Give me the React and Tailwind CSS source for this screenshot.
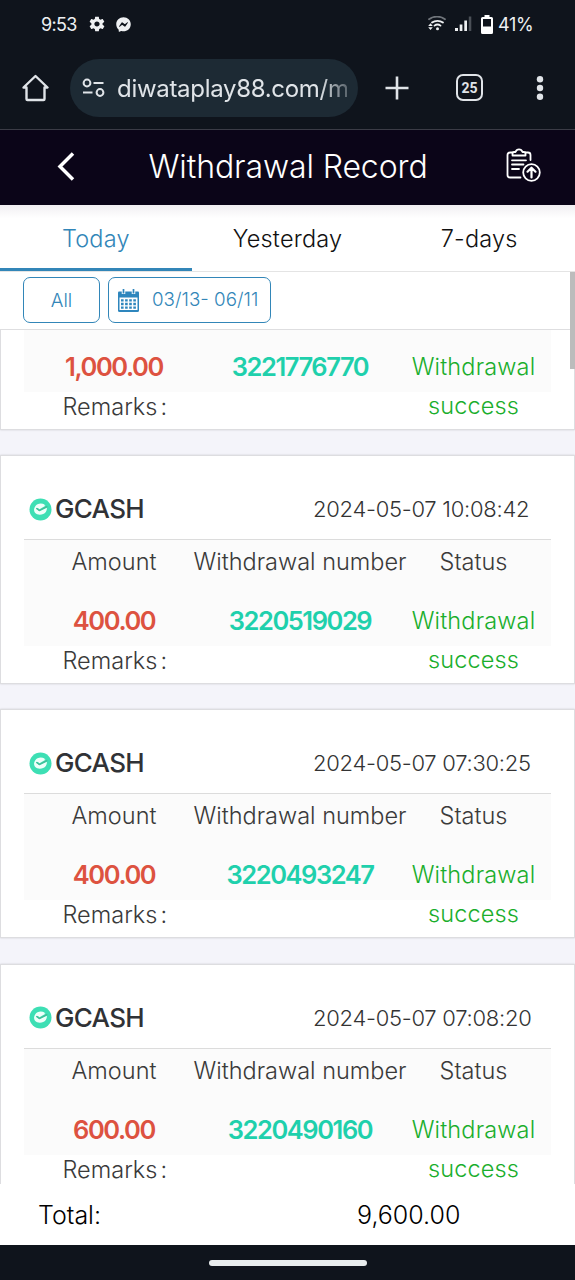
import { useState } from "react";
import clsx from "clsx";
import { IoMdSettings } from "react-icons/io";
import { FaFacebookMessenger } from "react-icons/fa";

const records = [
  { id: "3221776770", amount: "1,000.00" },
  { id: "3220519029", amount: "400.00", time: "2024-05-07 10:08:42" },
  { id: "3220493247", amount: "400.00", time: "2024-05-07 07:30:25" },
  { id: "3220490160", amount: "600.00", time: "2024-05-07 07:08:20" },
];

const tabs = ["Today", "Yesterday", "7-days"];

function StatusBar() {
  return (
    <div className="flex h-12 items-center justify-between pl-[41px] pr-[42px] text-[18px] text-[#eef0f2]">
      <div className="flex items-center">
        <span className="w-[36px] whitespace-nowrap tracking-[-0.7px]">9:53</span>
        <IoMdSettings className="ml-[11px] h-[18px] w-[18px]" />
        <FaFacebookMessenger className="ml-[10px] h-[15px] w-[15px]" />
      </div>
      <div className="flex items-center">
        <svg className="h-[16px] w-[18px]" viewBox="0 0 18 16" fill="none" strokeLinecap="round">
          <path d="M1 3.2C5.500 -.2 12.500 -.2 17 3.200" stroke="#70757b" strokeWidth="1.800" />
          <path d="M4 6.500C7 4.200 12 4.200 15 6.500M6.500 9.600C8.200 8.300 10.800 8.300 12.500 9.600" stroke="#eef0f2" strokeWidth="1.800" />
          <circle cx="9.500" cy="12.700" r="1.500" fill="#eef0f2" />
          <path d="M.2 10L2.500 7.300L4.800 10ZM.2 11.300L2.500 14L4.800 11.300Z" fill="#eef0f2" />
        </svg>
        <svg className="ml-[9px] h-[16px] w-[17px]" viewBox="0 0 17 16">
          <rect x="0" y="12" width="3" height="3" fill="#eef0f2" />
          <rect x="4.700" y="8.500" width="2.700" height="6.500" fill="#eef0f2" />
          <rect x="9.300" y="4.500" width="2.700" height="10.500" fill="#eef0f2" />
          <rect x="13.800" y="0.500" width="2.500" height="14.500" fill="#4b5057" />
        </svg>
        <svg className="ml-[9px] h-[19px] w-[12px]" viewBox="0 0 12 19">
          <path d="M3.500 0H8.500V2H10.500Q12 2 12 3.500V17.500Q12 19 10.500 19H1.500Q0 19 0 17.500V3.500Q0 2 1.500 2H3.500Z" fill="#fff" />
          <rect x="2" y="4" width="8" height="7.500" fill="#0f141c" />
        </svg>
        <span className="ml-[5px] w-[35px] whitespace-nowrap tracking-[-0.3px]">41%</span>
      </div>
    </div>
  );
}

function BrowserBar() {
  return (
    <div className="flex h-[82px] items-center border-b border-[#3b3c46] pb-[2px] pl-[22px] text-[#e0e4e8]">
      <svg className="h-[28px] w-[27px]" viewBox="0 0 27 28" fill="none" stroke="currentColor" strokeWidth="2.400" strokeLinejoin="round">
        <path d="M1.500 13.500L13.500 2L25.500 13.500H22.500V25Q22.500 26 21.500 26H5.500Q4.500 26 4.500 25V13.500Z" />
      </svg>
      <div className="ml-[21px] flex h-[58px] w-[288px] items-center rounded-full bg-[#1d2a34] pl-3">
        <svg className="h-[20px] w-[23px] shrink-0" viewBox="0 0 23 20" fill="none" stroke="currentColor" strokeWidth="2">
          <circle cx="5" cy="5" r="3.400" />
          <path d="M11.500 5H21.500M1 14.500H10.500" />
          <circle cx="18" cy="14.500" r="3.400" />
        </svg>
        <span className="ml-[12px] w-[230px] whitespace-nowrap pt-[3px] text-[24px] tracking-[-0.300px] [mask-image:linear-gradient(to_right,#000_88%,transparent_106%)]">
          diwataplay88.com/m
        </span>
      </div>
      <svg className="ml-[27px] h-[24px] w-[24px]" viewBox="0 0 24 24" stroke="currentColor" strokeWidth="2.600">
        <path d="M0.500 12H23.500M12 0.500V23.500" />
      </svg>
      <div className="ml-[47px] flex h-[27px] w-[27px] items-center justify-center rounded-[7px] border-[2px] border-current font-[Roboto] text-[14px] font-bold leading-none">
        25
      </div>
      <svg className="ml-[53px] h-[24px] w-[8px]" viewBox="0 0 8 24" fill="currentColor">
        <circle cx="4" cy="3.200" r="3.200" />
        <circle cx="4" cy="12" r="3.200" />
        <circle cx="4" cy="20.800" r="3.200" />
      </svg>
    </div>
  );
}

function PageHeader() {
  return (
    <div className="flex h-[75px] items-center bg-[#0b0518] text-white">
      <svg className="mb-[3px] ml-[57px] h-[30px] w-[18px]" viewBox="0 0 18 30" fill="none" stroke="currentColor" strokeWidth="3.500">
        <path d="M16 2.500L3 15.500L16 28.500" />
      </svg>
      <h1 className="mb-[2px] ml-[73.500px] w-[277.500px] whitespace-nowrap text-[32px] font-light tracking-[-0.100px]">
        Withdrawal Record
      </h1>
      <svg className="ml-[80px] mb-[6px] h-[34px] w-[35px]" viewBox="0 0 35 34" fill="none" stroke="currentColor" strokeWidth="1.800" strokeLinecap="round" strokeLinejoin="round">
        <path d="M6.500 4.500H4Q1.500 4.500 1.500 7V27Q1.500 29.500 4 29.500H14.500M19.500 4.500H22Q24.500 4.500 24.500 7V12" />
        <path d="M6.500 7.500V5.500Q6.500 4 8 4H9.500Q10.500 1.300 13 1.300T16.500 4H18Q19.500 4 19.500 5.500V7.500Z" />
        <path d="M6 12.300H20M6 16.500H17.500M6 21H13" />
        <circle cx="25.500" cy="24.500" r="8.300" />
        <path d="M25.500 29.500V20M21.500 23.700L25.500 19.700L29.500 23.700" strokeWidth="2.200" />
      </svg>
    </div>
  );
}

function CalendarIcon() {
  return (
    <svg className="h-[23px] w-[21px]" viewBox="0 0 21 23" fill="none">
      <path d="M0 3.500Q0 2.500 1 2.500H20Q21 2.500 21 3.500V21.500Q21 23 19.500 23H1.500Q0 23 0 21.500Z" fill="#2e86bd" />
      <path d="M1.500 8.500H19.500V21H1.500Z" fill="#fff" />
      <path d="M5.500 0V5M15.500 0V5" stroke="#fff" strokeWidth="3.500" />
      <path d="M5.500 0V4.500M15.500 0V4.500" stroke="#2e86bd" strokeWidth="1.700" />
      <path d="M3 11.300H18M3 15H18M3 18.700H18" stroke="#2e86bd" strokeWidth="2.300" strokeDasharray="2.600 1.500" />
    </svg>
  );
}

function GcashIcon() {
  return (
    <svg className="h-[23px] w-[23px]" viewBox="0 0 23 23" fill="none">
      <circle cx="11.500" cy="11.500" r="11" fill="#3ddfb4" />
      <path d="M15.800 6.700C12.500 4.700 8 5.500 6.300 8.200C4 11.300 5 15.200 8.200 16.300C11 17.200 15 16.600 16.800 14C17.800 12.500 18 11 17.800 9.800L10.500 13.300L7 10.500Z" fill="#effffa" />
      <path d="M7.300 10.300L10.300 12.500L18.300 8.300" stroke="#45bd98" strokeWidth="1.400" />
      <path d="M8 9.300L10.500 11.300L16.500 7.800L14 6.500L9 7Z" fill="#effffa" />
    </svg>
  );
}

function RecordCard({ record }) {
  // the top record is scrolled past its heading
  const scrolled = !record.time;

  return (
    <div
      className={clsx(
        "shrink-0 border-x border-b border-[#dddde0] bg-white px-[23px] shadow-[0_0_2px_rgba(0,0,0,0.15)]",
        scrolled ? "h-[100px]" : "h-[229px] border-t"
      )}
    >
      {!scrolled && (
        <div className="flex h-[84px] items-end justify-between border-b border-[#dcdcdc] pb-[10px] pl-[5px] pr-[20px] leading-10">
          <div className="flex items-center gap-[3px]">
            <GcashIcon />
            <span className="text-[26px] font-medium tracking-[-0.7px] text-[#303236]">GCASH</span>
          </div>
          <span className="w-[218px] whitespace-nowrap text-[22px] font-light tracking-[-0.270px] text-[#333]">{record.time}</span>
        </div>
      )}
      <div className={clsx("bg-[#fbfbfb] text-[23.500px] font-light text-[#3a3a3a]", scrolled ? "h-[62px] pt-[17px]" : "h-[106px]")}>
        {!scrolled && (
          <div className="grid grid-cols-[180px_192px_155px] pb-[17px] leading-[44px]">
            <span className="text-center">Amount</span>
            <span className="flex justify-center whitespace-nowrap">Withdrawal number</span>
            <span className="text-center">Status</span>
          </div>
        )}
        <div className="grid grid-cols-[180px_192px_155px] leading-[39px]">
          <span className="text-center text-[25.500px] font-semibold tracking-[-1.400px] text-[#dd5240]">{record.amount}</span>
          <span className="text-center text-[25.500px] font-semibold tracking-[-1.450px] text-[#1fd0ac]">{record.id}</span>
          <span className="px-3 text-center text-[23.500px] tracking-[0.150px] text-[#1aae2c]">Withdrawal success</span>
        </div>
      </div>
      <div className="w-[150px] pl-[38.500px] pt-px text-[23.500px] font-light leading-[28px] text-[#3a3a3a]">
        Remarks<span className="ml-[3px]">:</span>
      </div>
    </div>
  );
}

function App() {
  const [activeTab, setActiveTab] = useState("Today");

  return (
    <div className="flex h-[1280px] w-[575px] flex-col overflow-hidden bg-white font-[Inter,sans-serif]">
      <div className="bg-[#0f141c]">
        <StatusBar />
        <BrowserBar />
      </div>
      <PageHeader />

      {/* Tabs */}
      <div className="grid h-[67px] grid-cols-3 border-b border-[#e4e4e4] bg-linear-to-b from-[#f1eff2] to-white to-20%">
        {tabs.map((tab) => (
          <button
            key={tab}
            onClick={() => setActiveTab(tab)}
            className={clsx(
              "border-b-[3px] pt-[4px] text-[23.500px] font-light tracking-[0.2px]",
              activeTab === tab ? "border-[#3286b8] text-[#3286b8]" : "border-transparent text-[#111]"
            )}
          >
            {tab}
          </button>
        ))}
      </div>

      {/* Filters */}
      <div className="relative flex h-[58px] shrink-0 gap-2 border-b border-[#dedee0] pl-[23px] pt-[5px] text-[18.800px] font-light text-[#3286b8]">
        <button className="h-[46px] w-[77px] rounded-[7px] border border-[#3286b8] pt-[2px]">All</button>
        <button className="flex h-[46px] w-[163px] items-center rounded-[7px] border border-[#3286b8] pl-[9px]">
          <CalendarIcon />
          <span className="ml-[13px] whitespace-nowrap pt-px">03/13- 06/11</span>
        </button>
        <div className="absolute right-0 top-0 z-10 h-[97px] w-[5px] bg-[#bcbcbc]"></div>
      </div>

      {/* Records */}
      <div className="flex h-[854px] shrink-0 flex-col gap-[25.200px] overflow-hidden bg-[#f4f4fa]">
        {records.map((record) => (
          <RecordCard key={record.id} record={record} />
        ))}
      </div>

      <div className="flex h-[61px] shrink-0 items-center bg-white pl-[38px] pt-[2px] text-[25px] font-light text-black">
        <span className="w-[319px]">Total:</span>
        <span>9,600.00</span>
      </div>
      <div className="flex h-[35px] shrink-0 items-center justify-center bg-[#0f141c]">
        <div className="h-[6px] w-[158px] rounded-full bg-[#e8eced]"></div>
      </div>
    </div>
  );
}

export default App;
